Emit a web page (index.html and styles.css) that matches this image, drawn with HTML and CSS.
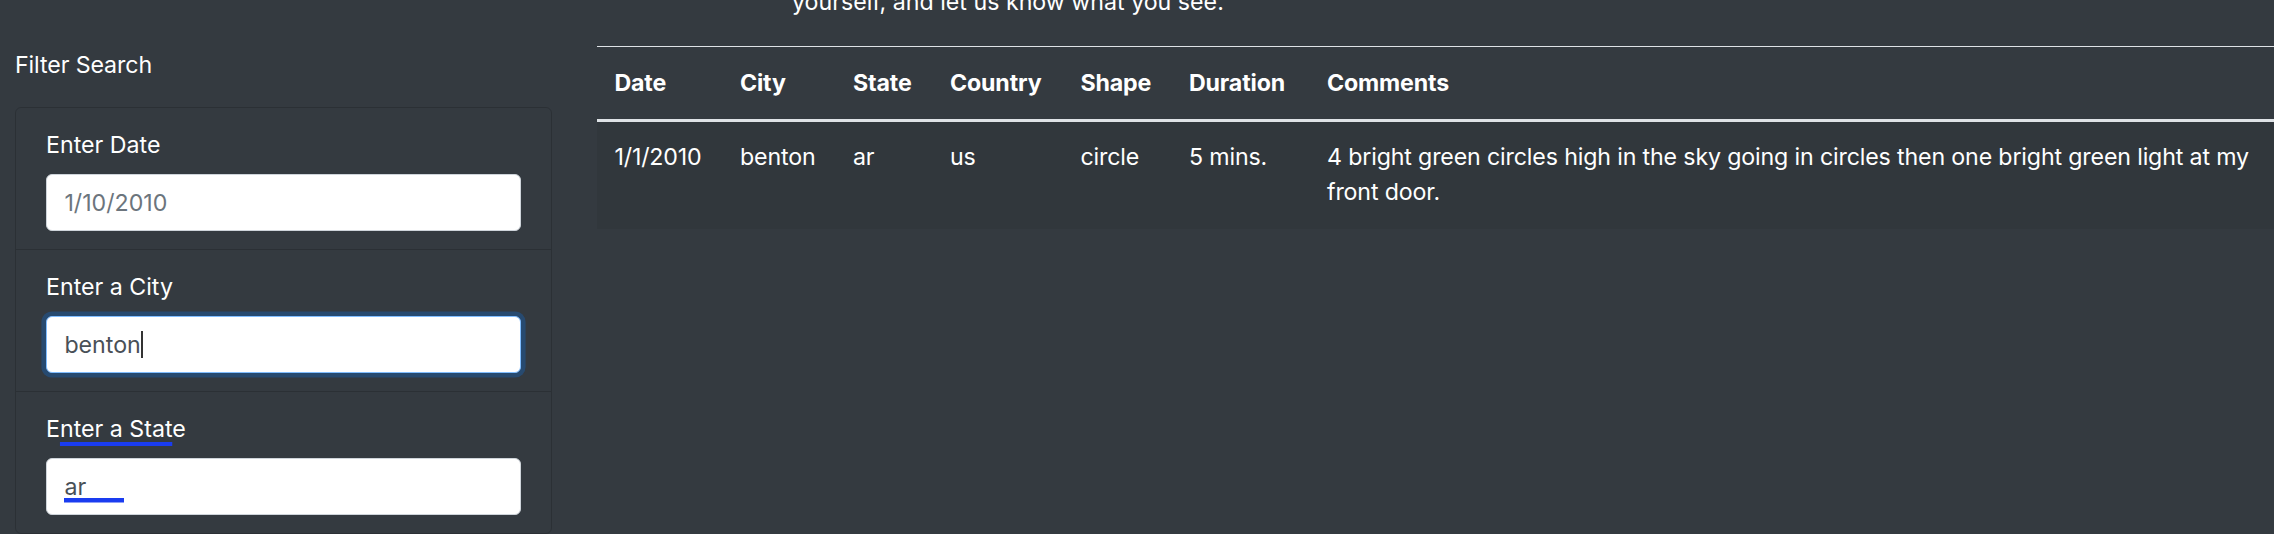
FILE: index.html
```html
<!DOCTYPE html>
<html lang="en">
<head>
<meta charset="utf-8">
<title>UFO Sightings</title>
<link rel="stylesheet" href="styles.css">
</head>
<body>
<div class="intro">
  <p class="intro-text">yourself, and let us know what you see.</p>
</div>
<main class="layout">
  <aside class="filters">
    <h5 class="filters-title">Filter Search</h5>
    <ul class="filter-list">
      <li class="filter-item">
        <label class="filter-label" for="datetime">Enter Date</label>
        <input class="filter-input" id="datetime" type="text" placeholder="1/10/2010">
      </li>
      <li class="filter-item">
        <label class="filter-label" for="city">Enter a City</label>
        <div class="input-wrap">
          <input class="filter-input is-focused" id="city" type="text" value="benton">
          <div class="input-mirror" aria-hidden="true"><span class="ghost">benton</span><span class="caret"></span></div>
        </div>
      </li>
      <li class="filter-item">
        <label class="filter-label" for="state">E<span class="marked">nter a Stat</span>e</label>
        <input class="filter-input has-mark" id="state" type="text" value="ar">
      </li>
    </ul>
  </aside>
  <section class="results">
    <table class="ufo-table">
      <colgroup>
        <col class="c-date"><col class="c-city"><col class="c-state"><col class="c-country"><col class="c-shape"><col class="c-duration"><col class="c-comments">
      </colgroup>
      <thead>
        <tr><th>Date</th><th>City</th><th>State</th><th>Country</th><th>Shape</th><th>Duration</th><th>Comments</th></tr>
      </thead>
      <tbody>
        <tr><td>1/1/2010</td><td>benton</td><td>ar</td><td>us</td><td>circle</td><td>5 mins.</td><td>4 bright green circles high in the sky going in circles then one bright green light at my front door.</td></tr>
      </tbody>
    </table>
  </section>
</main>
</body>
</html>
```

FILE: styles.css
```css
* { box-sizing: border-box; }

html, body {
  margin: 0;
  padding: 0;
}

body {
  width: 2274px;
  height: 534px;
  overflow: hidden;
  background: #343a40;
  color: #ffffff;
  font-family: Inter, "Helvetica Neue", Arial, sans-serif;
  font-size: 23.2px;
  line-height: 35px;
}

.intro {
  height: 20px;
  overflow: hidden;
  padding-left: 792px;
}

.intro-text {
  margin: -15px 0 0 0;
  white-space: nowrap;
}

.layout {
  display: grid;
  grid-template-columns: 537px 1677px;
  column-gap: 45px;
  padding-left: 15px;
  align-items: start;
}

.filters-title {
  margin: 28px 0 24px 0;
  font-size: 23.2px;
  font-weight: 400;
  line-height: 35px;
  letter-spacing: -0.1px;
}

.filter-list {
  list-style: none;
  margin: 0;
  padding: 0;
  border: 1px solid rgba(0, 0, 0, 0.16);
  border-radius: 6px;
}

.filter-item {
  padding: 20px 30px 18px 30px;
  border-top: 1px solid rgba(0, 0, 0, 0.16);
}

.filter-item:first-child {
  border-top: 0;
}

.filter-label {
  display: block;
  margin-bottom: 11px;
  line-height: 35px;
}

.marked {
  text-decoration: underline;
  text-decoration-color: #1a3cf0;
  text-decoration-thickness: 4px;
  text-underline-offset: 5px;
  text-decoration-skip-ink: none;
}

.input-wrap {
  position: relative;
}

.filter-input {
  display: block;
  width: 100%;
  height: 57px;
  padding: 0 17.4px;
  font-family: inherit;
  font-size: 23.2px;
  color: #495057;
  background: #ffffff;
  border: 1px solid #ced4da;
  border-radius: 6px;
  outline: none;
}

.filter-input::placeholder {
  color: #6c757d;
  opacity: 1;
}

.filter-input.is-focused {
  border-color: #80bdff;
  box-shadow: 0 0 0 4.6px rgba(0, 123, 255, 0.25);
}

.filter-input.has-mark {
  background-image: linear-gradient(#1a3cf0, #1a3cf0);
  background-repeat: no-repeat;
  background-position: 17.4px 39px;
  background-size: 60px 4.5px;
}

.input-mirror {
  position: absolute;
  inset: 0;
  display: flex;
  align-items: center;
  padding: 0 18.4px;
  font-size: 23.2px;
  pointer-events: none;
}

.ghost {
  color: transparent;
}

.caret {
  display: inline-block;
  width: 2px;
  height: 27px;
  background: #333;
}

.results {
  padding-top: 26px;
}

.ufo-table {
  width: 1677px;
  table-layout: fixed;
  border-collapse: collapse;
  color: #ffffff;
}

.c-date { width: 125.6px; }
.c-city { width: 113px; }
.c-state { width: 97px; }
.c-country { width: 130.5px; }
.c-shape { width: 108.5px; }
.c-duration { width: 138px; }

.ufo-table th,
.ufo-table td {
  text-align: left;
  vertical-align: top;
  padding: 18.2px 17.4px;
  line-height: 35px;
  letter-spacing: -0.15px;
}

.ufo-table th {
  font-weight: 700;
  padding-top: 18.6px;
  padding-bottom: 18.6px;
  border-top: 1px solid #dee2e6;
  border-bottom: 3px solid #dee2e6;
}

.ufo-table tbody tr {
  background: rgba(0, 0, 0, 0.05);
}
```
